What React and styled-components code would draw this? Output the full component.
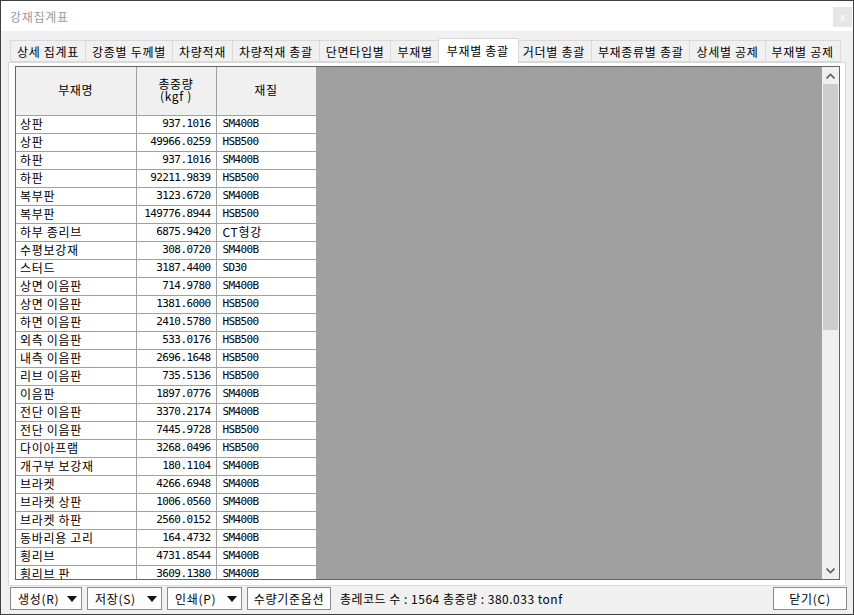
import React from 'react'
import styled, { createGlobalStyle } from 'styled-components'

const Global = createGlobalStyle`
  html, body { margin: 0; padding: 0; background: #fff; }
  body {
    font-family: "Noto Sans CJK KR", "Liberation Sans", sans-serif;
    font-size: 12px;
    letter-spacing: 0.7px;
    color: #000;
  }
  * { box-sizing: border-box; }
`

// narrow fixed-pitch face for figures and steel grades
const mono = '"DejaVu Sans Mono", "Liberation Mono", monospace'

const Window = styled.div`
  width: 854px;
  height: 615px;
  border: 1px solid #3f3f3f;
  display: flex;
  flex-direction: column;
  background: #f0f0f0;
`

const TitleBar = styled.div`
  height: 30px;
  background: #fff;
  display: flex;
  align-items: center;
  justify-content: space-between;
  padding-left: 9px;
  color: #9a9a9a;
`

const CloseBox = styled.div`
  width: 19px;
  height: 20px;
  margin-right: 1px;
  margin-top: 2px;
  background: #e6e6e6;
  color: #fff;
  font-size: 11px;
  line-height: 19px;
  text-align: center;
  letter-spacing: 0;
`

const Body = styled.div`
  flex: 1;
  display: flex;
  flex-direction: column;
  padding: 7px 7px 0 7px;
  min-height: 0;
`

const TabStrip = styled.div`
  height: 24px;
  display: flex;
  align-items: flex-end;
  padding-left: 2px;
  position: relative;
  z-index: 1;
`

const Tab = styled.div`
  height: ${p => (p.$active ? '25px' : '22px')};
  margin-bottom: ${p => (p.$active ? '-1px' : '0')};
  margin-right: ${p => (p.$active ? '-2px' : '0')};
  margin-left: ${p => (p.$first ? '0' : p.$active ? '-2px' : '-1px')};
  padding: ${p => (p.$active ? '0 9px 0 8px' : '1px 6px 0 6px')};
  border: 1px solid #d9d9d9;
  border-bottom: ${p => (p.$active ? 'none' : '1px solid #d9d9d9')};
  background: ${p => (p.$active ? '#fff' : '#f0f0f0')};
  display: flex;
  align-items: center;
  white-space: nowrap;
  position: relative;
  z-index: ${p => (p.$active ? 2 : 0)};
  line-height: 1;
`

const Panel = styled.div`
  height: 524px;
  border: 1px solid #d9d9d9;
  background: #fff;
  padding: 3px 5px 6px 6px;
`

const GridFrame = styled.div`
  height: 514px;
  border: 1px solid #646464;
  display: flex;
  overflow: hidden;
`

const DataArea = styled.div`
  flex: 1;
  background: #a0a0a0;
  overflow: hidden;
`

const Table = styled.table`
  border-collapse: collapse;
  table-layout: fixed;
  width: 300px;
  background: #fff;
`

const HeadCell = styled.th`
  height: 48px;
  width: ${p => p.$w}px;
  background: #f0f0f0;
  border-right: 1px solid #a0a0a0;
  border-bottom: 1px solid #a0a0a0;
  font-weight: normal;
  font-size: 12px;
  line-height: 1;
  text-align: center;
  padding: 0 0 2px 0;
`

const HeadLine = styled.span`
  display: block;
  height: 12px;
  line-height: 12px;
`

const Cell = styled.td`
  height: 18px;
  border-right: 1px solid #a0a0a0;
  border-bottom: 1px solid #a0a0a0;
  padding: ${p => (p.$align === 'right' ? '0 5px 1px 0' : `0 4px 1px ${p.$pad || 4}px`)};
  text-align: ${p => p.$align || 'left'};
  white-space: nowrap;
  overflow: hidden;
  line-height: 16px;
  font-size: ${p => (p.$num ? '11px' : '12px')};
  letter-spacing: ${p => (p.$num ? '-0.6px' : '0.7px')};
  font-family: ${p => (p.$num ? mono : 'inherit')};
`

const ScrollBar = styled.div`
  width: 17px;
  background: #f0f0f0;
  display: flex;
  flex-direction: column;
`

const ScrollBtn = styled.div`
  height: 17px;
  display: flex;
  align-items: center;
  justify-content: center;
`

const ScrollTrack = styled.div`
  flex: 1;
  padding: 0 1px;
`

const Thumb = styled.div`
  height: 246px;
  background: #cdcdcd;
`

const Footer = styled.div`
  height: 27px;
  display: flex;
  align-items: flex-start;
  padding-top: 1px;
  padding-left: 2px;
  gap: 5px;
`

const Button = styled.div`
  height: 23px;
  width: ${p => p.$w}px;
  border: 1px solid #8a8a8a;
  background: #fdfdfd;
  display: flex;
  align-items: center;
  justify-content: ${p => (p.$menu ? 'flex-start' : 'center')};
  padding: ${p => (p.$menu ? '0 4px 0 7px' : '0')};
  white-space: nowrap;
  line-height: 14px;
  margin-left: ${p => (p.$push ? 'auto' : '0')};
  margin-right: ${p => (p.$push ? '-1px' : '0')};

  svg { margin-left: auto; flex: none; }
`

const Status = styled.div`
  height: 23px;
  display: flex;
  align-items: center;
  margin-left: 4px;
  white-space: nowrap;
  letter-spacing: 0.5px;
`

const Caret = () => (
  <svg width="10" height="6" viewBox="0 0 10 6">
    <path d="M0 0 L10 0 L5 6 Z" fill="#111" />
  </svg>
)

const tabs = ['상세 집계표', '강종별 두께별', '차량적재', '차량적재 총괄', '단면타입별', '부재별', '부재별 총괄', '거더별 총괄', '부재종류별 총괄', '상세별 공제', '부재별 공제']

const rows = [
  ['상판', '937.1016', 'SM400B'],
  ['상판', '49966.0259', 'HSB500'],
  ['하판', '937.1016', 'SM400B'],
  ['하판', '92211.9839', 'HSB500'],
  ['복부판', '3123.6720', 'SM400B'],
  ['복부판', '149776.8944', 'HSB500'],
  ['하부 종리브', '6875.9420', 'CT형강'],
  ['수평보강재', '308.0720', 'SM400B'],
  ['스터드', '3187.4400', 'SD30'],
  ['상면 이음판', '714.9780', 'SM400B'],
  ['상면 이음판', '1381.6000', 'HSB500'],
  ['하면 이음판', '2410.5780', 'HSB500'],
  ['외측 이음판', '533.0176', 'HSB500'],
  ['내측 이음판', '2696.1648', 'HSB500'],
  ['리브 이음판', '735.5136', 'HSB500'],
  ['이음판', '1897.0776', 'SM400B'],
  ['전단 이음판', '3370.2174', 'SM400B'],
  ['전단 이음판', '7445.9728', 'HSB500'],
  ['다이아프램', '3268.0496', 'HSB500'],
  ['개구부 보강재', '180.1104', 'SM400B'],
  ['브라켓', '4266.6948', 'SM400B'],
  ['브라켓 상판', '1006.0560', 'SM400B'],
  ['브라켓 하판', '2560.0152', 'SM400B'],
  ['동바리용 고리', '164.4732', 'SM400B'],
  ['횡리브', '4731.8544', 'SM400B'],
  ['횡리브 판', '3609.1380', 'SM400B'],
  ['가로보', '2210.4410', 'SM400B'],
]

export default function App() {
  return (
    <>
      <Global />
      <Window>
        <TitleBar>
          <span>강재집계표</span>
          <CloseBox>x</CloseBox>
        </TitleBar>
        <Body>
          <TabStrip>
            {tabs.map((t, i) => (
              <Tab key={t + i} $first={i === 0} $active={i === 6}>{t}</Tab>
            ))}
          </TabStrip>
          <Panel>
            <GridFrame>
              <DataArea>
                <Table>
                  <thead>
                    <tr>
                      <HeadCell $w={120}>부재명</HeadCell>
                      <HeadCell $w={80}>
                        <HeadLine>총중량</HeadLine>
                        <HeadLine>(kgf )</HeadLine>
                      </HeadCell>
                      <HeadCell $w={100}>재질</HeadCell>
                    </tr>
                  </thead>
                  <tbody>
                    {rows.map((r, i) => (
                      <tr key={i}>
                        <Cell>{r[0]}</Cell>
                        <Cell $align="right" $num>{r[1]}</Cell>
                        <Cell $pad={6} $num={!/[가-힣]/.test(r[2])}>{r[2]}</Cell>
                      </tr>
                    ))}
                  </tbody>
                </Table>
              </DataArea>
              <ScrollBar>
                <ScrollBtn>
                  <svg width="9" height="6" viewBox="0 0 9 6">
                    <path d="M0.5 5.5 L4.5 1.5 L8.5 5.5" fill="none" stroke="#606060" strokeWidth="1.6" />
                  </svg>
                </ScrollBtn>
                <ScrollTrack>
                  <Thumb />
                </ScrollTrack>
                <ScrollBtn>
                  <svg width="9" height="6" viewBox="0 0 9 6">
                    <path d="M0.5 0.5 L4.5 4.5 L8.5 0.5" fill="none" stroke="#606060" strokeWidth="1.6" />
                  </svg>
                </ScrollBtn>
              </ScrollBar>
            </GridFrame>
          </Panel>
          <Footer>
            <Button $w={72} $menu>생성(R)<Caret /></Button>
            <Button $w={75} $menu>저장(S)<Caret /></Button>
            <Button $w={75} $menu>인쇄(P)<Caret /></Button>
            <Button $w={84}>수량기준옵션</Button>
            <Status>총레코드 수 : 1564 총중량 : 380.033 tonf</Status>
            <Button $w={74} $push>닫기(C)</Button>
          </Footer>
        </Body>
      </Window>
    </>
  )
}
